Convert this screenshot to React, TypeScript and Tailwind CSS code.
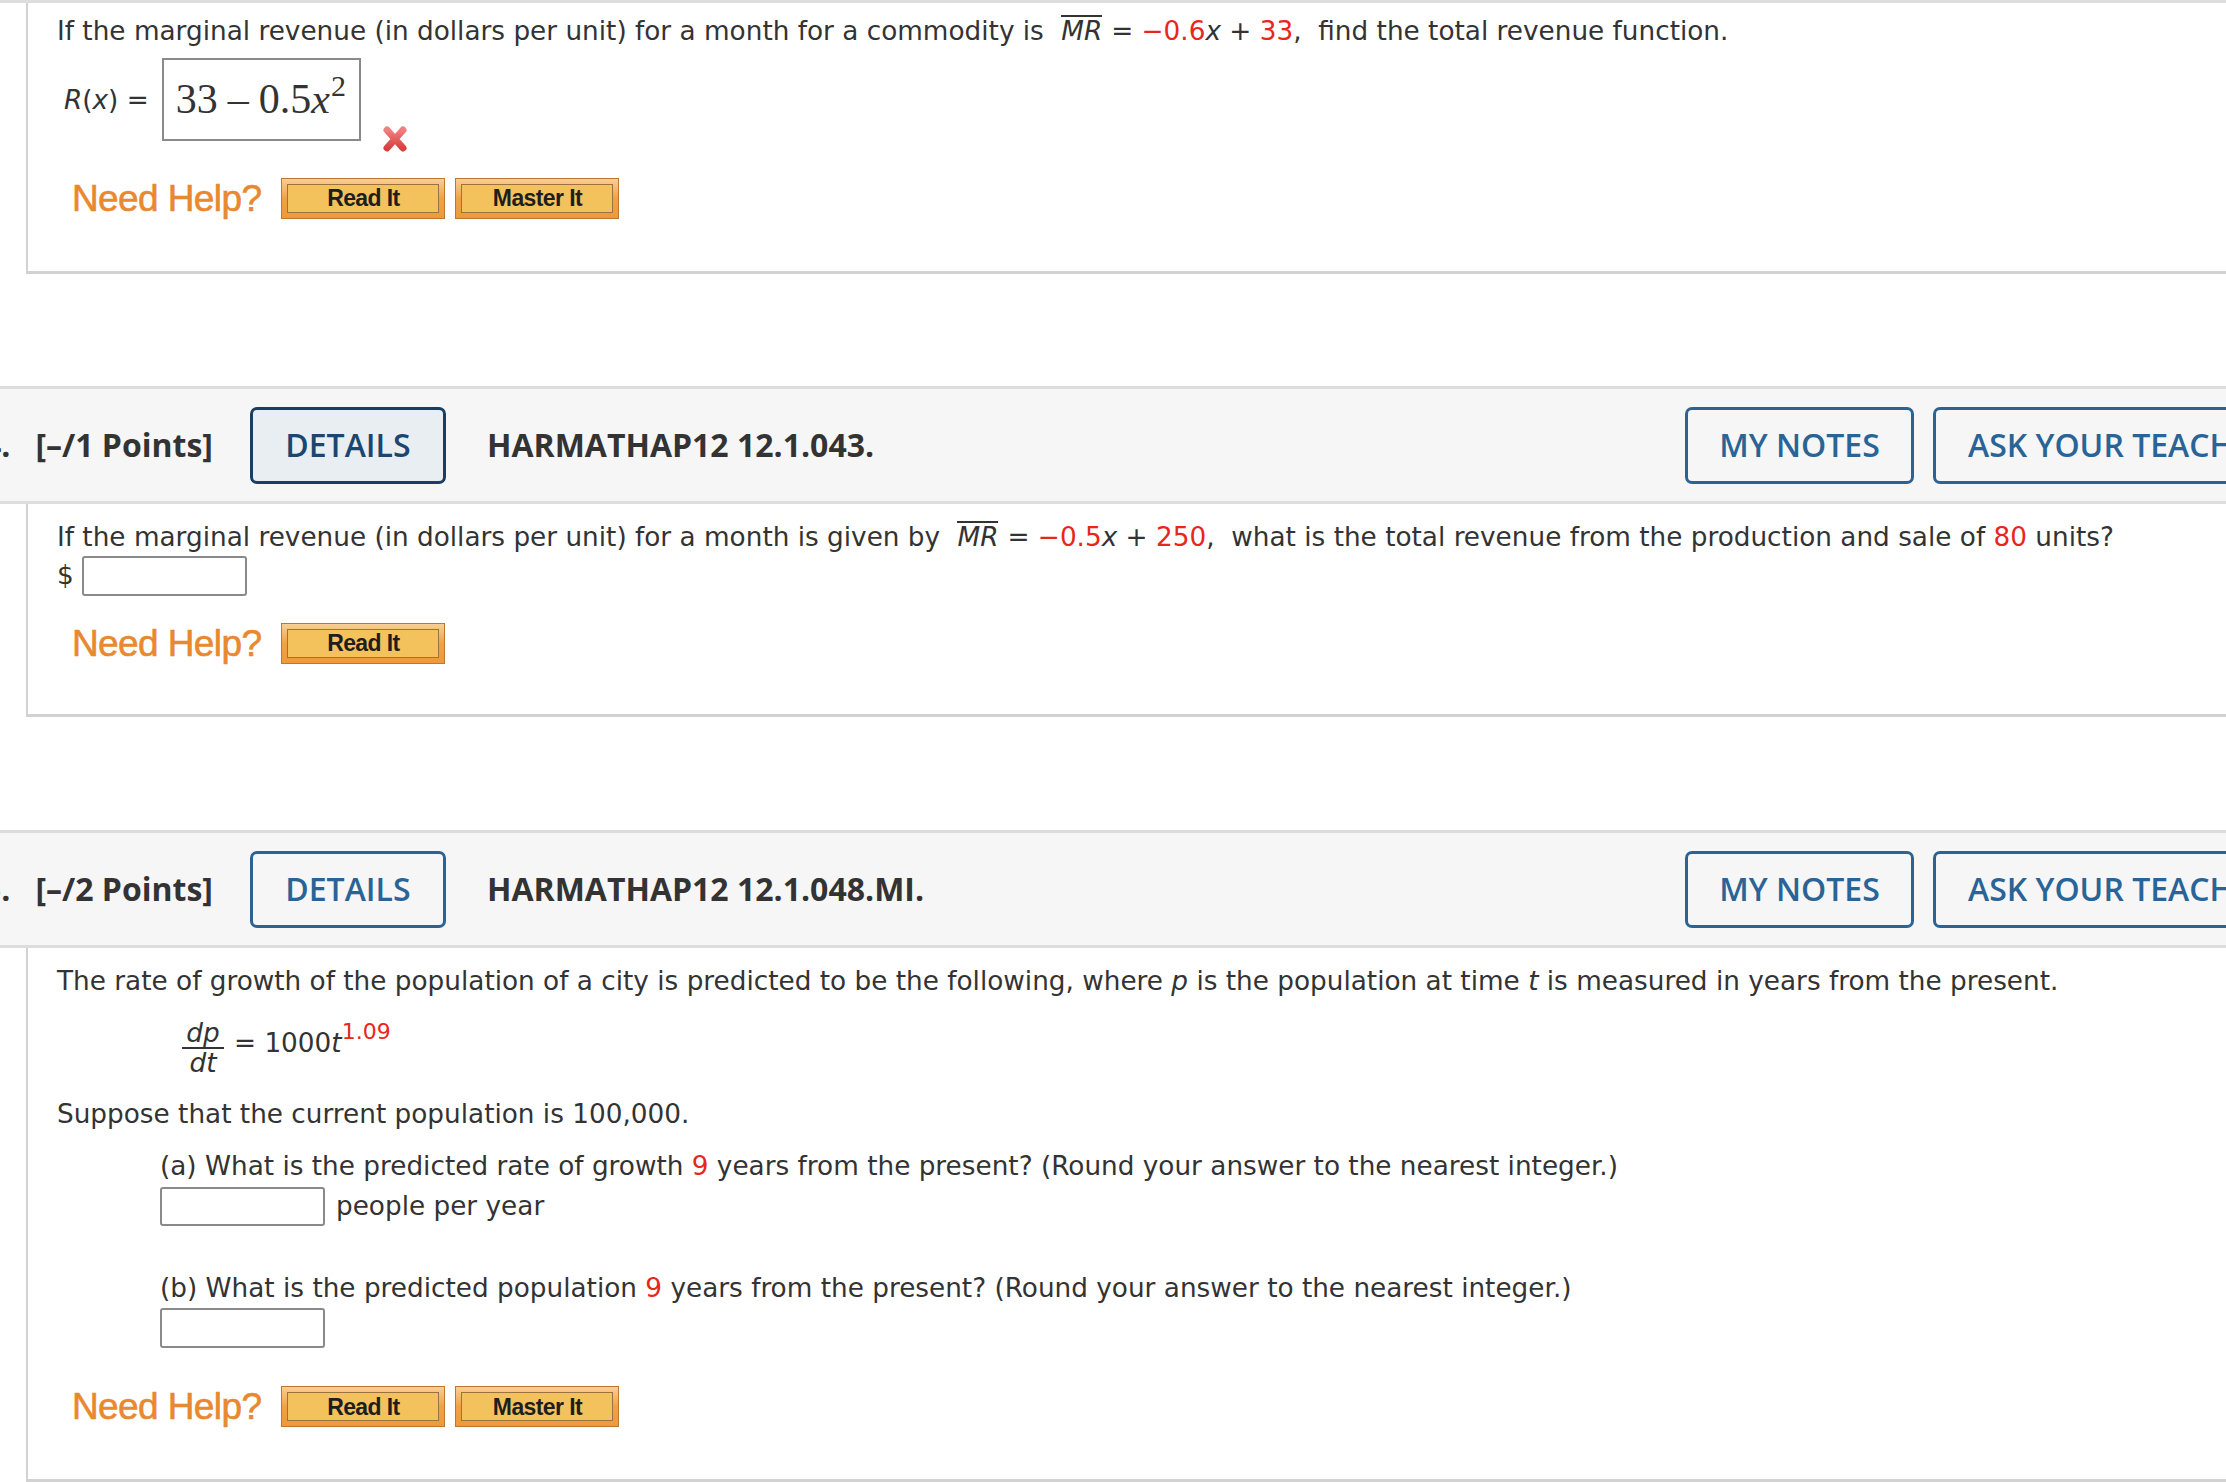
import React from "react";

const Red = ({ children }: { children: React.ReactNode }) => (
  <span className="text-[#e8261c]">{children}</span>
);

const MR = () => (
  <span className="inline-block italic border-t-2 border-[#333] leading-[26px] pt-[1px] mx-[9px]">MR</span>
);

function HelpButton({ label }: { label: string }) {
  return (
    <div className="w-[164px] h-[41px] border border-[#c0762c] bg-gradient-to-b from-[#f8cf93] via-[#efa245] to-[#ec9a3c] p-[5px]">
      <div className="h-full border border-[#9a7440] bg-[#f4c25d] flex items-center justify-center font-['Liberation_Sans',Arial,sans-serif] font-bold text-[23px] text-[#1e1e1e] tracking-[-0.6px]">
        {label}
      </div>
    </div>
  );
}

function NeedHelp({ labels }: { labels: string[] }) {
  return (
    <div className="flex items-center">
      <span className="ml-[15px] mr-[20px] font-['Liberation_Sans',Arial,sans-serif] text-[37px] leading-none text-[#e8892f] tracking-[-0.6px] [-webkit-text-stroke:0.6px_#e8892f]">
        Need Help?
      </span>
      <div className="flex gap-[10px]">
        {labels.map((l) => (
          <HelpButton key={l} label={l} />
        ))}
      </div>
    </div>
  );
}

function Header({
  num,
  points,
  code,
  selected,
}: {
  num: number;
  points: number;
  code: string;
  selected?: boolean;
}) {
  return (
    <div className="w-[2420px] h-[118px] border-y-[3px] border-[#dddddd] bg-[#f6f6f6] flex items-center font-['Open_Sans',sans-serif] font-bold text-[32px] text-[#333]">
      <span className="ml-[-17px]">{num}.</span>
      <span className="ml-[25px]">[–/{points} Points]</span>
      <div
        className={
          selected
            ? "ml-[37px] w-[196px] h-[77px] rounded-[7px] border-[3px] border-[#1a3e63] bg-[#e8eef2] text-[#1a4670] font-semibold flex items-center justify-center"
            : "ml-[37px] w-[196px] h-[77px] rounded-[7px] border-[3px] border-[#2a6496] text-[#2a6496] font-semibold flex items-center justify-center"
        }
      >
        DETAILS
      </div>
      <span className="ml-[41px]">{code}</span>
      <div className="ml-auto flex gap-[19px] pr-[87px]">
        <div className="w-[229px] h-[77px] rounded-[7px] border-[3px] border-[#2a6496] text-[#2a6496] font-semibold flex items-center justify-center">
          MY NOTES
        </div>
        <div className="w-[400px] h-[77px] rounded-[7px] border-[3px] border-[#2a6496] text-[#2a6496] font-semibold flex items-center pl-[32px] whitespace-nowrap">
          ASK YOUR TEACHER
        </div>
      </div>
    </div>
  );
}

function RedX() {
  return (
    <svg width="26" height="28" viewBox="0 0 26 28">
      <defs>
        <linearGradient id="rx" x1="0" y1="0" x2="0" y2="1">
          <stop offset="0" stopColor="#f08080" />
          <stop offset="1" stopColor="#d94040" />
        </linearGradient>
      </defs>
      <path d="M5 5 L21 23 M21 5 L5 23" stroke="url(#rx)" strokeWidth="7" strokeLinecap="round" />
    </svg>
  );
}

export default function App() {
  return (
    <div className="w-[2226px] h-[1482px] overflow-hidden bg-white font-['DejaVu_Sans',Verdana,sans-serif] text-[26.3px] text-[#333]">
      <div className="w-[2420px]">
        <div className="h-[3px] bg-[#dddddd]" />
        {/* Q3 body */}
        <div className="ml-[26px] h-[271px] border-l-2 border-b-[3px] border-[#d2d2d2] pl-[29px] pt-[12px]">
          <p className="leading-[32px] whitespace-nowrap">
            If the marginal revenue (in dollars per unit) for a month for a commodity is <MR />={" "}
            <Red>−0.6</Red>
            <i>x</i> + <Red>33</Red>,&nbsp; find the total revenue function.
          </p>
          <div className="mt-[11px] flex items-start">
            <span className="ml-[7px] mt-[26px] leading-[32px]">
              <i>R</i>(<i>x</i>) =
            </span>
            <div className="ml-[13px] w-[199px] h-[83px] border-2 border-[#8a8a8a] flex items-center pl-[12px] font-['Liberation_Serif',serif] text-[42px] text-[#333] whitespace-nowrap">
              33<span className="mx-[10px]">–</span>0.5<i>x</i>
              <span className="text-[30px] relative top-[-14px] ml-[1px]">2</span>
            </div>
            <div className="ml-[21px] mt-[67px]">
              <RedX />
            </div>
          </div>
          <div className="mt-[25px]">
            <NeedHelp labels={["Read It", "Master It"]} />
          </div>
        </div>

        {/* Q4 */}
        <div className="mt-[112px]">
          <Header num={4} points={1} code="HARMATHAP12 12.1.043." selected />
        </div>
        <div className="ml-[26px] h-[213px] border-l-2 border-b-[3px] border-[#d2d2d2] pl-[29px] pt-[17px]">
          <p className="leading-[32px] whitespace-nowrap">
            If the marginal revenue (in dollars per unit) for a month is given by <MR />={" "}
            <Red>−0.5</Red>
            <i>x</i> + <Red>250</Red>,&nbsp; what is the total revenue from the production and sale of{" "}
            <Red>80</Red> units?
          </p>
          <div className="mt-[3px] flex items-center">
            <span>$</span>
            <div className="ml-[8px] w-[165px] h-[40px] border-2 border-[#8a8a8a] rounded-[3px] bg-white" />
          </div>
          <div className="mt-[27px]">
            <NeedHelp labels={["Read It"]} />
          </div>
        </div>

        {/* Q5 */}
        <div className="mt-[113px]">
          <Header num={5} points={2} code="HARMATHAP12 12.1.048.MI." />
        </div>
        <div className="ml-[26px] h-[534px] border-l-2 border-b-[3px] border-[#d2d2d2] pl-[29px] pt-[17px]">
          <p className="leading-[32px] whitespace-nowrap">
            The rate of growth of the population of a city is predicted to be the following, where <i>p</i> is the
            population at time <i>t</i> is measured in years from the present.
          </p>
          <div className="mt-[22px] ml-[125px] flex items-center">
            <div className="flex flex-col items-center italic">
              <span className="leading-[28px] px-[2px]">dp</span>
              <span className="w-[42px] h-[2px] bg-[#333]" />
              <span className="leading-[28px]">dt</span>
            </div>
            <span className="ml-[10px] relative top-[-4px]">
              = 1000<i>t</i>
              <span className="text-[#e8261c] text-[22px] relative top-[-13px]">1.09</span>
            </span>
          </div>
          <p className="mt-[21px] leading-[32px]">Suppose that the current population is 100,000.</p>
          <div className="ml-[103px]">
            <p className="mt-[20px] leading-[32px] whitespace-nowrap">
              (a) What is the predicted rate of growth <Red>9</Red> years from the present? (Round your answer to
              the nearest integer.)
            </p>
            <div className="mt-[5px] flex items-center">
              <div className="w-[165px] h-[39px] border-2 border-[#8a8a8a] rounded-[3px] bg-white" />
              <span className="ml-[11px]">people per year</span>
            </div>
            <p className="mt-[46px] leading-[32px] whitespace-nowrap">
              (b) What is the predicted population <Red>9</Red> years from the present? (Round your answer to the
              nearest integer.)
            </p>
            <div className="mt-[4px] w-[165px] h-[40px] border-2 border-[#8a8a8a] rounded-[3px] bg-white" />
          </div>
          <div className="mt-[38px]">
            <NeedHelp labels={["Read It", "Master It"]} />
          </div>
        </div>
      </div>
    </div>
  );
}
